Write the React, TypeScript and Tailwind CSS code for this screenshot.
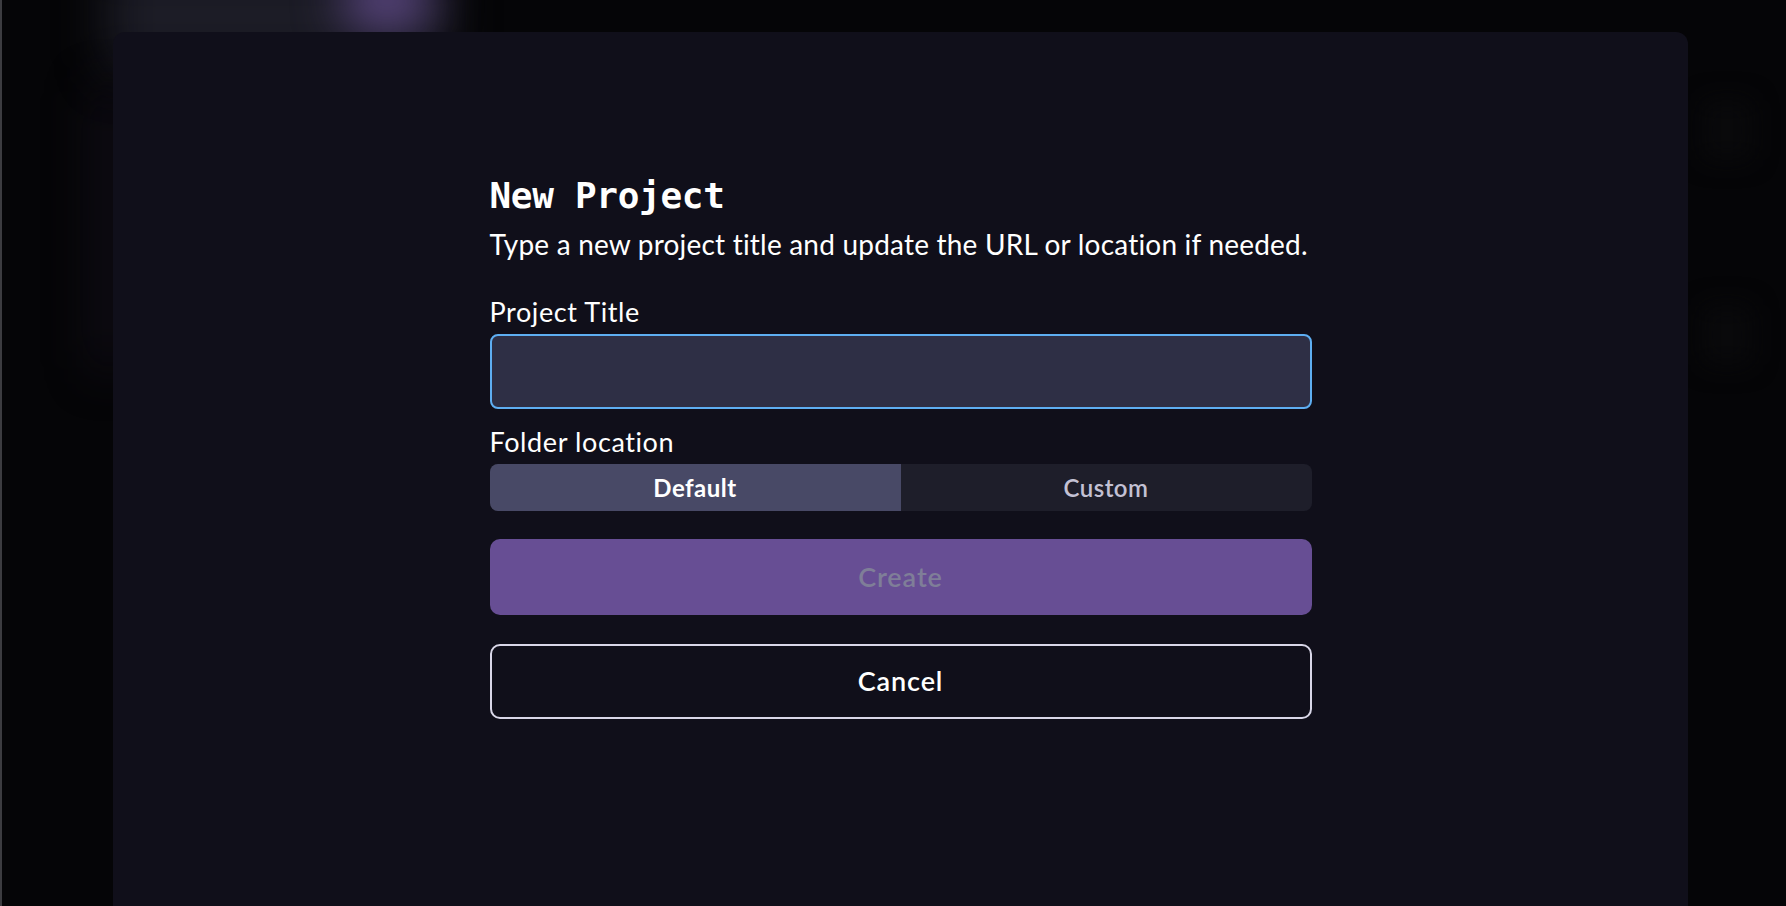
const sans = "font-['Lato','Noto_Sans',sans-serif]";

function Segmented() {
  return (
    <div className="mt-1.5 flex h-[47px] w-full overflow-hidden rounded-lg bg-[#1e1e2a]">
      <button className={`flex-1 bg-[#484966] text-[24px] font-bold tracking-[0.5px] text-white ${sans}`}>
        Default
      </button>
      <button className={`flex-1 text-[24px] font-semibold tracking-[0.5px] text-[#c3c1d4] ${sans}`}>
        Custom
      </button>
    </div>
  );
}

export default function App() {
  return (
    <div className="relative h-[906px] w-full overflow-hidden border-l-2 border-[#3c3c40] bg-[#050507]">
      {/* blurred app behind the modal */}
      <div className="absolute left-[105px] top-[-40px] h-[110px] w-[340px] rounded-2xl bg-[#1c1c26] blur-xl" />
      <div className="absolute left-[340px] top-[-30px] h-[60px] w-[90px] rounded-full bg-[#5a4680] blur-xl" />
      <div className="absolute left-[95px] top-[90px] h-[280px] w-[24px] rounded-full bg-[#140f1c] blur-xl" />
      <div className="absolute left-[1700px] top-[100px] h-[60px] w-[50px] rounded-lg bg-[#09090b] blur-md" />
      <div className="absolute left-[1700px] top-[305px] h-[60px] w-[50px] rounded-lg bg-[#09090b] blur-md" />

      <div className="relative z-10 ml-[111px] mt-[32px] h-[874px] w-[1575px] rounded-t-xl bg-[#100f1a]">
        <div className="mx-auto flex w-[822px] flex-col pt-[142px]">
          <h1 className="font-['DejaVu_Sans_Mono','Liberation_Mono',monospace] text-[36px] font-bold leading-[44px] tracking-[-0.3px] text-white">
            New Project
          </h1>
          <p className={`mt-2 text-[28px] leading-[36px] tracking-[0.2px] text-white ${sans}`}>
            Type a new project title and update the URL or location if needed.
          </p>

          <label className={`mt-[34px] text-[27px] leading-[32px] tracking-[0.6px] text-white ${sans}`}>
            Project Title
          </label>
          <input
            className={`mt-1.5 h-[75px] w-full rounded-lg border-2 border-[#5eaef2] bg-[#2e2f45] px-4 text-[24px] text-white outline-none ${sans}`}
          />

          <label className={`mt-[17px] text-[27px] leading-[32px] tracking-[0.6px] text-white ${sans}`}>
            Folder location
          </label>
          <Segmented />

          <button
            className={`mt-[28px] h-[76px] w-full rounded-[10px] bg-[#674e94] text-[27px] font-semibold tracking-[0.9px] text-[#7f7e98] ${sans}`}
          >
            Create
          </button>
          <button
            className={`mt-[29px] h-[75px] w-full rounded-[10px] border-2 border-[#d9d7e8] text-[27px] font-semibold tracking-[0.9px] text-white ${sans}`}
          >
            Cancel
          </button>
        </div>
      </div>
    </div>
  );
}
